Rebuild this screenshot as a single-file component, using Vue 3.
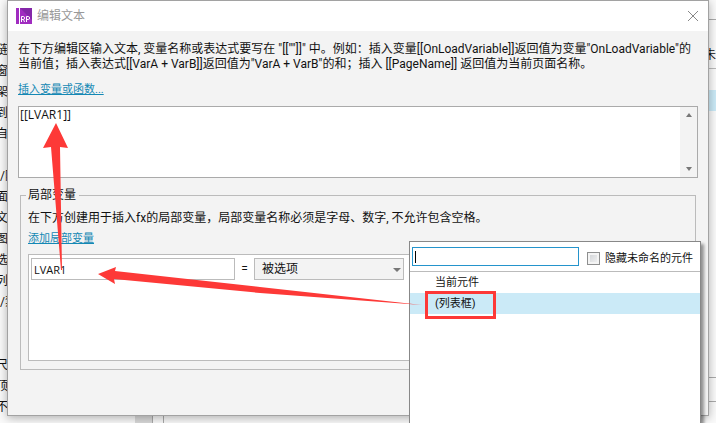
<script setup>
import { ref } from 'vue';

const expression = ref('[[LVAR1]]');
const variableName = ref('LVAR1');
const source = ref('被选项');
const search = ref('');
const hideUnnamed = ref(false);
const selected = ref('(列表框)');

const widgets = ['当前元件', '(列表框)'];

const actions = [
  '链', '窗', '架', '到', '自', '', '/隐', '面', '文', '图', '选', '列',
  '/禁', '', '', '尺', '顶', '不',
];
</script>

<template>
  <main class="desktop">
    <div class="backdrop">
      <ul class="actions">
        <li v-for="(action, i) in actions" :key="i" :class="{ pair: action.length > 1 }">{{ action }}</li>
      </ul>
      <div class="scroll-strip"></div>
      <div class="side-panel">
        <div class="side-top"></div>
        <div class="side-title">未</div>
        <div class="side-list"><div class="side-row"></div></div>
        <div class="side-footer"></div>
      </div>
    </div>

    <section class="dialog">
      <header>
        <svg class="logo" width="16" height="16" viewBox="0 0 16 16">
          <rect width="16" height="16" fill="#a02cc0" />
          <path d="M4 0H16V12Z" fill="#8427a8" />
          <path d="M3 0H4V16H3Z" fill="#fff" />
          <path
            d="M5.500 14V8.500H7.500Q8.500 8.500 8.500 10T7.500 11.500H5.500M7.500 11.500L8.500 14M10.500 14V8.500H12.500Q13.500 8.500 13.500 10T12.500 11.500H10.500"
            fill="none"
            stroke="#fff"
          />
        </svg>
        <h1>编辑文本</h1>
        <button class="close" aria-label="关闭">
          <svg width="12" height="12" viewBox="0 0 12 12">
            <path d="M1 1L11 11M11 1L1 11" stroke="#888" fill="none" />
          </svg>
        </button>
      </header>

      <div class="body">
        <p class="intro">
          在下方编辑区输入文本, 变量名称或表达式要写在 "[[""]]" 中。例如：插入变量[[OnLoadVariable]]返回值为变量"OnLoadVariable"的<br />当前值；插入表达式[[VarA + VarB]]返回值为"VarA + VarB"的和；插入 [[PageName]] 返回值为当前页面名称。
        </p>
        <a href="#" class="insert-link">插入变量或函数...</a>

        <div class="editor">
          <textarea v-model="expression" aria-label="表达式"></textarea>
          <div class="scrollbar">
            <svg width="6" height="4" viewBox="0 0 6 4"><path d="M0 4L3 0L6 4Z" fill="#777" /></svg>
            <svg width="6" height="4" viewBox="0 0 6 4"><path d="M0 0H6L3 4Z" fill="#777" /></svg>
          </div>
        </div>

        <fieldset>
          <legend>局部变量</legend>
          <p>在下方创建用于插入fx的局部变量，局部变量名称必须是字母、数字, 不允许包含空格。</p>
          <a href="#">添加局部变量</a>
          <div class="variables">
            <div class="variable">
              <input v-model="variableName" type="text" aria-label="变量名称" />
              <span>=</span>
              <div class="select-wrap">
                <select v-model="source" aria-label="变量来源">
                  <option>被选项</option>
                </select>
                <svg width="8" height="4" viewBox="0 0 8 4"><path d="M0 0H8L4 4Z" fill="#777" /></svg>
              </div>
            </div>
          </div>
        </fieldset>
      </div>
    </section>

    <section class="picker">
      <div class="picker-top">
        <div class="search">
          <input v-model="search" type="text" aria-label="搜索元件" />
          <i class="caret"></i>
        </div>
        <label for="hide-unnamed">
          <input id="hide-unnamed" v-model="hideUnnamed" type="checkbox" />
          隐藏未命名的元件
        </label>
      </div>
      <ul>
        <li
          v-for="widget in widgets"
          :key="widget"
          :class="{ selected: widget === selected }"
          @click="selected = widget"
        >
          {{ widget }}
        </li>
      </ul>
    </section>

    <!-- red arrows and the frame round the chosen widget -->
    <svg class="marks" width="716" height="423" viewBox="0 0 716 423">
      <path d="M56 123L68 148L60 147L62 270H61L51 147L43 148Z" fill="#fd3937" />
      <path d="M98 274L116 267L115 271L260 287L422 305L260 293L114 279L115 284Z" fill="#fd3937" />
      <rect x="426.500" y="292.500" width="68" height="25" fill="none" stroke="#fd3937" stroke-width="3" />
    </svg>
  </main>
</template>

<style>
body {
  overflow: hidden;
}
</style>

<style scoped>
* {
  box-sizing: border-box;
}

.desktop {
  position: relative;
  height: 100vh;
  overflow: hidden;
  background-color: #fafafa;
  color: #111;
  font-family: Roboto, "Noto Sans CJK SC", sans-serif;
  font-size: 12px;
  line-height: 15px;
}

h1, p, ul {
  margin: 0;
  padding: 0;
  font-size: 12px;
  font-weight: normal;
}

ul {
  list-style: none;
}

a {
  color: #1488b4;
  font-size: 11px;
}

/* window behind the dialog */
.backdrop {
  display: flex;
  height: 100%;
}

.actions {
  display: flex;
  flex-direction: column;
  align-items: flex-end;
  width: 8px;
  padding-top: 40px;
}

.actions li {
  flex: none;
  height: 21px;
  line-height: 21px;
  white-space: nowrap;
}

.actions .pair {
  align-self: flex-start;
}

.scroll-strip {
  width: 156px;
  border-right: 1px solid #aaa;
  background: linear-gradient(to right, #fafafa 127px, #dadada 127px, #dadada 144px, #aaa 144px, #aaa 145px, #fafafa 145px);
}

.side-panel {
  flex: 1;
  display: flex;
  flex-direction: column;
  align-items: stretch;
}

.side-top {
  height: 20px;
  border-bottom: 1px solid #aaa;
}

.side-title {
  height: 49px;
  padding: 28px 0 0;
  border-bottom: 1px solid #bbb;
  text-align: right;
}

.side-list {
  flex: 1;
  padding-top: 21px;
}

.side-row {
  height: 21px;
  background-color: #cbeaf7;
}

.side-footer {
  height: 46px;
  border-top: 1px solid #aaa;
  background: linear-gradient(#fafafa 23px, #aaa 23px, #aaa 24px, #fafafa 24px);
}

.dialog {
  position: absolute;
  top: 0;
  left: 7px;
  right: 7px;
  bottom: 7px;
  border: 1px solid #a2a2a2;
  background-color: #f3f3f3;
  box-shadow: 0 2px 9px rgba(0, 0, 0, 0.3);
}

header {
  display: flex;
  align-items: center;
  gap: 5px;
  height: 30px;
  padding: 0 8px;
  background-color: #fff;
}

h1 {
  flex: 1;
  color: #999;
}

button {
  display: flex;
  padding: 1px;
  border: none;
  background: none;
}

.body {
  padding: 11px 10px;
}

.intro {
  white-space: nowrap;
}

.insert-link {
  display: block;
  width: max-content;
  margin-top: 10px;
}

.editor {
  display: flex;
  height: 72px;
  margin-top: 9px;
  border: 1px solid #aaa;
  background-color: #fff;
}

textarea {
  flex: 1;
  padding: 0 1px;
  border: none;
  outline: none;
  resize: none;
  overflow: hidden;
  color: #111;
  font-family: "Open Sans", sans-serif;
  font-size: 12px;
  line-height: 15px;
}

.scrollbar {
  display: flex;
  flex-direction: column;
  justify-content: space-between;
  align-items: center;
  width: 17px;
  padding: 6px 0;
  background-color: #f3f3f3;
}

fieldset {
  min-width: 0;
  margin: 10px 2px 0;
  padding: 8px 7px;
  border: 1px solid #bbb;
}

legend {
  margin-left: -2px;
  padding: 0 3px 0 2px;
}

fieldset a {
  display: block;
  width: max-content;
  margin-top: 5px;
}

.variables {
  height: 107px;
  margin-top: 8px;
  padding: 3px 2px;
  border: 1px solid #bbb;
  background-color: #fff;
}

.variable {
  display: flex;
  align-items: center;
}

.variable input {
  width: 204px;
  height: 22px;
  padding: 1px 2px 0;
  border: 1px solid #bbb;
  outline: none;
  color: #111;
  font-family: "Open Sans", sans-serif;
  font-size: 11px;
}

.variable span {
  width: 19px;
  text-align: center;
}

.select-wrap {
  position: relative;
  width: 150px;
}

select {
  display: block;
  width: 100%;
  height: 22px;
  padding: 0 7px;
  border: 1px solid #bbb;
  outline: none;
  appearance: none;
  background-color: #f3f3f3;
  color: #111;
  font-family: inherit;
  font-size: 12px;
}

.select-wrap svg {
  position: absolute;
  top: 10px;
  right: 3px;
}

.picker {
  position: absolute;
  top: 241px;
  left: 409px;
  right: 15px;
  bottom: -2px;
  border: 1px solid #888;
  background-color: #fff;
  box-shadow: 3px 3px 3px rgba(0, 0, 0, 0.4);
}

.picker-top {
  display: flex;
  align-items: center;
  gap: 8px;
  height: 30px;
  padding: 0 2px;
  border-bottom: 1px solid #bbb;
}

.search {
  position: relative;
  flex: 1;
}

.search input {
  display: block;
  width: 100%;
  height: 19px;
  border: 1px solid #2494cc;
  outline: none;
}

.caret {
  position: absolute;
  top: 4px;
  left: 3px;
  width: 1px;
  height: 12px;
  background-color: #000;
}

label {
  display: flex;
  align-items: center;
  gap: 5px;
  width: 111px;
  padding-top: 3px;
  white-space: nowrap;
  font-size: 11px;
}

label input {
  flex: none;
  width: 13px;
  height: 13px;
  margin: 0;
  appearance: none;
  border: 1px solid #8e8f8f;
  background: linear-gradient(135deg, #cdd0d4, #f6f6f6);
  box-shadow: inset 0 0 0 2px #f4f4f4;
}

label input:checked {
  background: #2494cc;
}

.picker li {
  height: 21px;
  padding-left: 25px;
  font-size: 11px;
  line-height: 21px;
}

.picker li.selected {
  background-color: #cbeaf7;
}

.marks {
  position: absolute;
  top: 0;
  left: 0;
  pointer-events: none;
}
</style>
